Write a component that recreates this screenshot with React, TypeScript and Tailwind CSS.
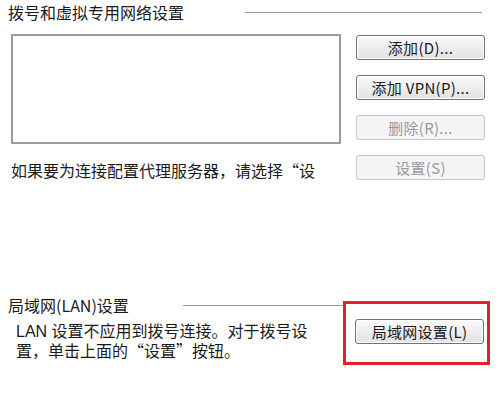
import React from "react";

const font = "font-['Noto_Sans_CJK_SC','Noto_Sans',sans-serif]";

interface WinButtonProps {
  label: string;
  disabled?: boolean;
}

const WinButton: React.FC<WinButtonProps> = ({ label, disabled }) => (
  <button
    type="button"
    disabled={disabled}
    className={`w-[129px] h-[25px] rounded-[3px] border text-[15px] leading-none tracking-[0.3px] flex items-center justify-center whitespace-pre ${
      disabled
        ? "border-[#c3c6ca] bg-[#f4f4f4] text-[#9a9a9a]"
        : "border-[#6f7379] bg-gradient-to-b from-[#fafafa] to-[#e2e2e2] text-[#1a1a1a] shadow-[inset_0_0_0_1px_#ffffff]"
    }`}
  >
    {label}
  </button>
);

export default function App() {
  return (
    <div className={`w-[500px] h-[400px] bg-white overflow-hidden text-[#1a1a1a] ${font}`}>
      {/* Dial-up section header */}
      <div className="flex items-center h-[24px] pl-[8px] pr-[18px]">
        <span className="text-[16px] leading-[24px]">拨号和虚拟专用网络设置</span>
        <div className="ml-auto w-[237px] h-px bg-[#9a9a9a]" />
      </div>

      {/* List + buttons */}
      <div className="flex mt-[10px]">
        <div className="pl-[11px] flex flex-col">
          <div className="w-[330px] h-[110px] border-2 border-[#979ca3] bg-white" />
          <p className="mt-[16px] text-[16px] leading-[20px] whitespace-nowrap">
            如果要为连接配置代理服务器，请选择“设
          </p>
        </div>
        <div className="ml-[15px] mt-[1px] flex flex-col gap-[15px]">
          <WinButton label="添加(D)..." />
          <WinButton label="添加 VPN(P)..." />
          <WinButton label="删除(R)..." disabled />
          <WinButton label="设置(S)" disabled />
        </div>
      </div>

      {/* LAN section */}
      <div className="flex mt-[115px]">
        <div className="w-[343px] flex flex-col">
          <div className="flex items-center h-[20px] pl-[8px]">
            <span className="text-[16px] leading-[20px]">局域网(LAN)设置</span>
            <div className="ml-auto w-[160px] h-px bg-[#9a9a9a]" />
          </div>
          <div className="mt-[8px] pl-[16px] text-[16px] leading-[18px] flex flex-col font-['Liberation_Sans','Noto_Sans_CJK_SC',sans-serif]">
            <span>LAN 设置不应用到拨号连接。对于拨号设</span>
            <span>
              置，单击上面的
              <span className="font-['Noto_Sans_CJK_SC',sans-serif]">“</span>
              设置
              <span className="font-['Noto_Sans_CJK_SC',sans-serif]">”</span>
              按钮。
            </span>
          </div>
        </div>
        <div className="mt-[6px] w-[147px] h-[64px] border-[3px] border-[#e3202b] pl-[9px] pt-[15px]">
          <WinButton label="局域网设置(L)" />
        </div>
      </div>
    </div>
  );
}
